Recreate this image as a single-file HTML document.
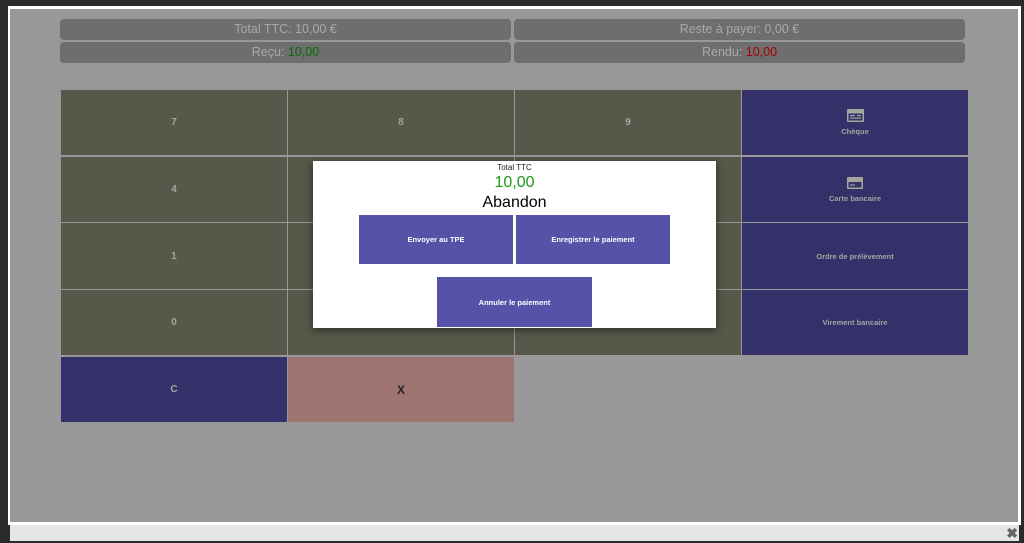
<!DOCTYPE html>
<html><head><meta charset="utf-8"><style>
*{box-sizing:border-box;margin:0;padding:0}
body{width:1024px;height:543px;background:#2b2b2b;position:relative;overflow:hidden;font-family:"Liberation Sans",sans-serif}
.frame{position:absolute;left:8px;top:6px;width:1013px;height:519px;background:#fff}
.content{position:absolute;left:10px;top:9px;width:1008px;height:513px;background:#989898}
.foot{position:absolute;left:10px;top:525px;width:1009px;height:16px;background:#e5e5e5}
.x{position:absolute;right:6px;top:525px;font-size:14px;font-weight:bold;color:#666}
.bar{position:absolute;height:21px;background:#6e6e6e;border-radius:4px;color:#a8a8a8;font-size:12.5px;text-align:center;line-height:21px}
.cell{position:absolute;width:226px;height:65px;color:#a5a5a0;font-size:10px;font-weight:bold;text-align:center;display:flex;flex-direction:column;align-items:center;justify-content:center}
.n{background:#575849}.b{background:#33306a;font-size:7.5px}
.modal{position:absolute;left:313px;top:161px;width:403px;height:167px;background:#fff;box-shadow:0 2px 8px rgba(0,0,0,.5);text-align:center}
.btn{position:absolute;background:#5552a8;color:#fff;font-size:7.5px;font-weight:bold;display:flex;align-items:center;justify-content:center}
</style></head><body>
<div class="frame"></div>
<div class="content"></div>
<div class="foot"></div><div class="x">✖</div>
<div class="bar" style="left:60px;top:19px;width:451px">Total TTC: 10,00 €</div>
<div class="bar" style="left:514px;top:19px;width:451px">Reste à payer: 0,00 €</div>
<div class="bar" style="left:60px;top:42px;width:451px">Reçu: <span style="color:#0a6b0a">10,00</span></div>
<div class="bar" style="left:514px;top:42px;width:451px">Rendu: <span style="color:#a00">10,00</span></div>

<div class="cell n" style="left:61px;top:90px">7</div>
<div class="cell n" style="left:288px;top:90px">8</div>
<div class="cell n" style="left:515px;top:90px">9</div>
<div class="cell b" style="left:742px;top:90px"><svg width="17" height="13" viewBox="0 0 17 13"><rect x="0" y="0" width="17" height="13" rx="1" fill="#a5a5a0"/><rect x="1.5" y="4.5" width="14" height="7" fill="#33306a"/><rect x="3" y="6" width="5" height="1.2" fill="#a5a5a0"/><rect x="10" y="6" width="4" height="1.2" fill="#a5a5a0"/><rect x="3" y="8.5" width="11" height="1.2" fill="#a5a5a0"/></svg><div style="margin-top:5px">Chèque</div></div>
<div class="cell n" style="left:61px;top:157px">4</div>
<div class="cell n" style="left:288px;top:157px">5</div>
<div class="cell n" style="left:515px;top:157px">6</div>
<div class="cell b" style="left:742px;top:157px"><svg width="16" height="12" viewBox="0 0 16 12"><rect x="0" y="0" width="16" height="12" rx="1" fill="#a5a5a0"/><rect x="1.5" y="5" width="13" height="5.5" fill="#33306a"/><rect x="3" y="7.5" width="5" height="1.2" fill="#a5a5a0"/></svg><div style="margin-top:5px">Carte bancaire</div></div>
<div class="cell n" style="left:61px;top:223px;height:66px">1</div>
<div class="cell n" style="left:288px;top:223px;height:66px">2</div>
<div class="cell n" style="left:515px;top:223px;height:66px">3</div>
<div class="cell b" style="left:742px;top:223px;height:66px">Ordre de prélèvement</div>
<div class="cell n" style="left:61px;top:290px">0</div>
<div class="cell n" style="left:288px;top:290px">,</div>
<div class="cell n" style="left:515px;top:290px">00</div>
<div class="cell b" style="left:742px;top:290px">Virement bancaire</div>
<div class="cell b" style="left:61px;top:357px;font-size:10px">C</div>
<div class="cell" style="left:288px;top:357px;background:#9e7470;color:#222;font-size:12px">X</div>

<div class="modal">
<div style="font-size:8px;margin-top:2px;color:#222">Total TTC</div>
<div style="font-size:16px;color:#1a9a1a;margin-top:2px;line-height:18px">10,00</div>
<div style="font-size:16px;color:#000;margin-top:2px;line-height:18px">Abandon</div>
<div class="btn" style="left:46px;top:54px;width:154px;height:49px">Envoyer au TPE</div>
<div class="btn" style="left:203px;top:54px;width:154px;height:49px">Enregistrer le paiement</div>
<div class="btn" style="left:124px;top:116px;width:155px;height:50px">Annuler le paiement</div>
</div>
</body></html>
